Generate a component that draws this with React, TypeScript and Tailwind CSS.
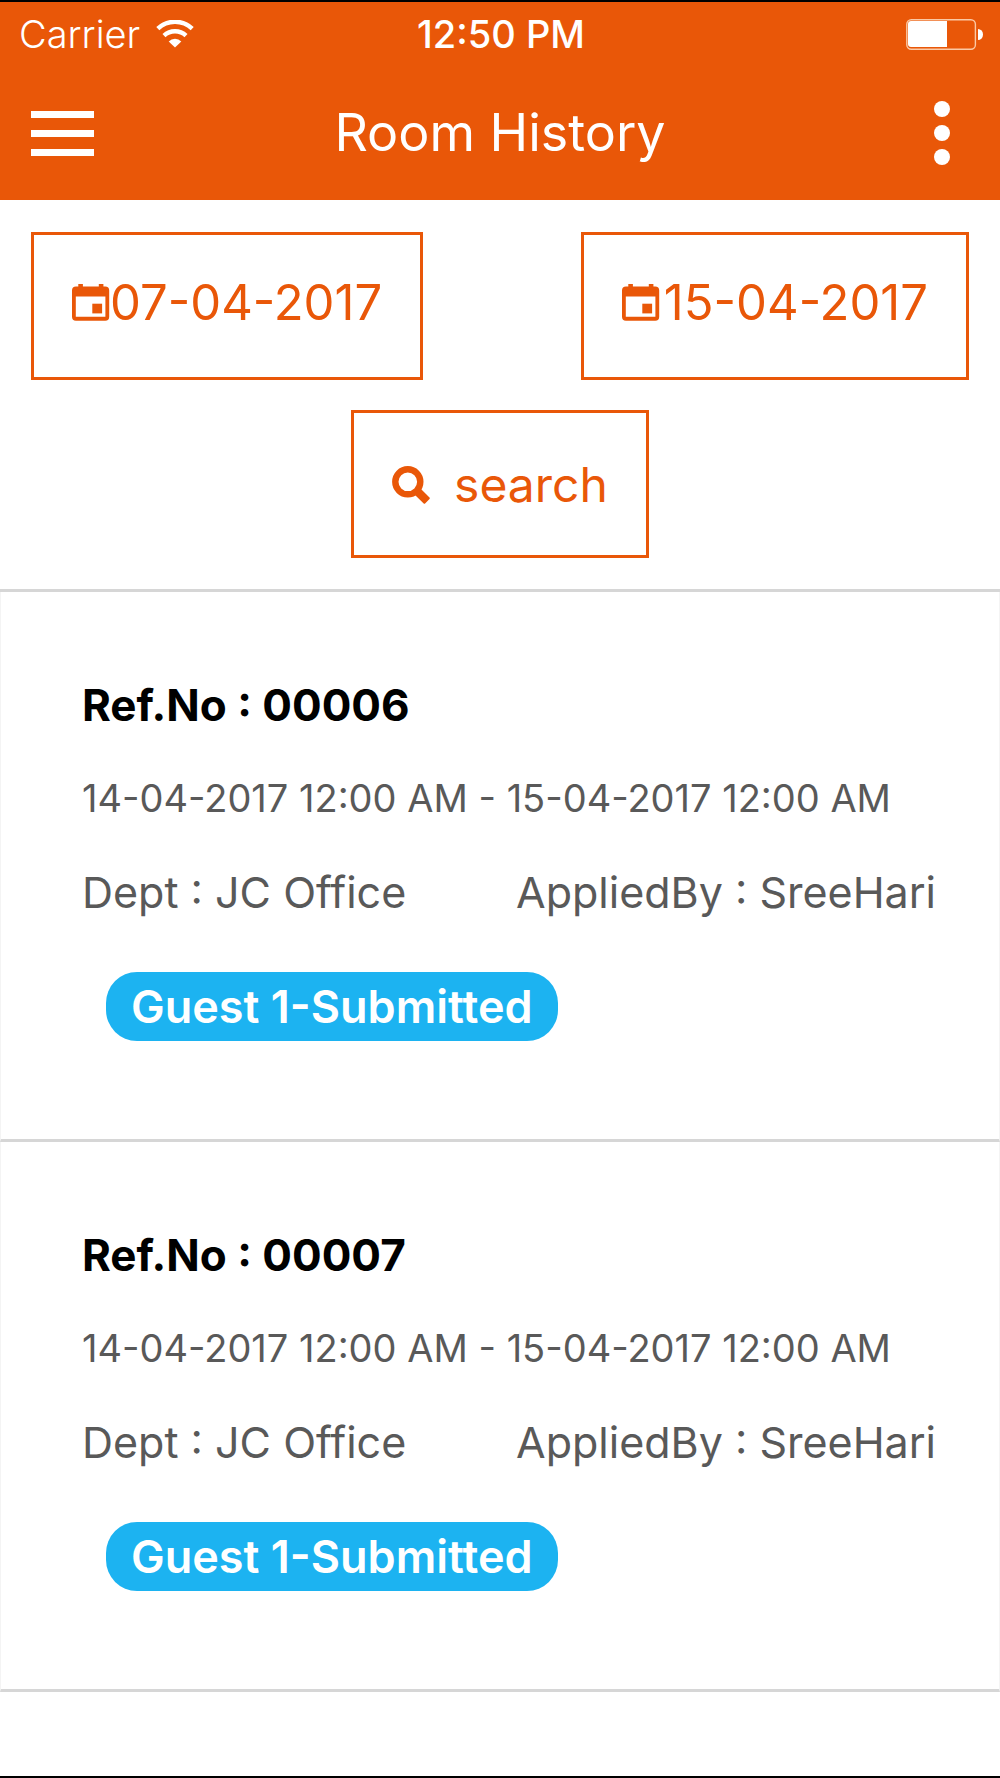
import { useState } from "react";

type Booking = {
  refNo: string;
  from: string;
  to: string;
  dept: string;
  appliedBy: string;
  guests: string[];
};

const BOOKINGS: Booking[] = [
  {
    refNo: "00006",
    from: "14-04-2017 12:00 AM",
    to: "15-04-2017 12:00 AM",
    dept: "JC Office",
    appliedBy: "SreeHari",
    guests: ["Guest 1-Submitted"],
  },
  {
    refNo: "00007",
    from: "14-04-2017 12:00 AM",
    to: "15-04-2017 12:00 AM",
    dept: "JC Office",
    appliedBy: "SreeHari",
    guests: ["Guest 1-Submitted"],
  },
];

// ── Icons ─────────────────────────────────────────────

function WifiIcon() {
  return (
    <svg viewBox="0 0 38 28" className="h-7 w-[38px]" fill="none" aria-hidden="true">
      <path d="M1.8 8.6a25 25 0 0 1 34.4 0" stroke="currentColor" strokeWidth="4.4" />
      <path d="M8 15.6a16 16 0 0 1 22 0" stroke="currentColor" strokeWidth="4.4" />
      <path d="M19 27.6l-6.3-6.2a9 9 0 0 1 12.6 0z" fill="currentColor" />
    </svg>
  );
}

function BatteryIcon() {
  return (
    <svg viewBox="0 0 77 31" className="h-[31px] w-[77px]" aria-hidden="true">
      <rect x="0.8" y="0.8" width="68.6" height="29.4" rx="4.5" fill="none" stroke="#fbc9a5" strokeWidth="1.4" />
      <path d="M5 2h36v26H5a3 3 0 0 1-3-3V5a3 3 0 0 1 3-3z" fill="currentColor" />
      <path d="M72 10a5 5.5 0 0 1 0 11z" fill="currentColor" />
    </svg>
  );
}

function CalendarIcon() {
  return (
    <svg viewBox="0 1 38 38" className="size-[38px] shrink-0" fill="currentColor" aria-hidden="true">
      <path
        fillRule="evenodd"
        d="M6.3 0h4.6v3.4h15.9V0h4.6v3.4h1.8a4 4 0 0 1 4 4v26.4a4 4 0 0 1-4 4H4a4 4 0 0 1-4-4V7.4a4 4 0 0 1 4-4h2.3zM3.8 13.4v20.4h29.6V13.4z"
      />
      <rect x="20.3" y="20.7" width="9.8" height="9.7" />
    </svg>
  );
}

function SearchIcon() {
  return (
    <svg viewBox="0 0 38 38" className="size-[38px] shrink-0" fill="none" aria-hidden="true">
      <circle cx="15.8" cy="15.8" r="12.5" stroke="currentColor" strokeWidth="6.4" />
      <path d="M28.5 22.5l9 9a1 1 0 0 1 0 1.4l-4.4 4.6a1 1 0 0 1-1.4 0l-9.2-9z" fill="currentColor" />
    </svg>
  );
}

// ── Header ────────────────────────────────────────────

function Header() {
  return (
    <header className="bg-[#e95708] text-white">
      <div className="grid h-16 grid-cols-[1fr_auto_1fr] items-center pr-[17px] pl-[19px]">
        <div className="flex items-center gap-4">
          <span className="text-[38px] leading-none font-light">Carrier</span>
          <WifiIcon />
        </div>
        <span className="text-[38px] leading-none font-medium">12:50 PM</span>
        <div className="flex justify-end">
          <BatteryIcon />
        </div>
      </div>

      <div className="grid h-[134px] grid-cols-[1fr_auto_1fr] items-center px-[31px]">
        <button aria-label="Open menu" className="flex w-[63px] flex-col gap-3">
          <span className="h-[7px] bg-white" />
          <span className="h-[7px] bg-white" />
          <span className="h-[7px] bg-white" />
        </button>
        <h1 className="text-[52px] leading-none">Room History</h1>
        <button
          aria-label="More options"
          className="mr-[19px] flex flex-col gap-2 justify-self-end"
        >
          <span className="size-4 rounded-full bg-white" />
          <span className="size-4 rounded-full bg-white" />
          <span className="size-4 rounded-full bg-white" />
        </button>
      </div>
    </header>
  );
}

// ── Filters ───────────────────────────────────────────

function DateButton({ label, value }: { label: string; value: string }) {
  return (
    <button
      aria-label={`${label} ${value}`}
      className="flex min-w-[388px] items-center justify-between border-3 border-[#e95708] px-[38px] pt-9 pb-[42px] text-[49px] leading-[64px]"
    >
      <CalendarIcon />
      {value}
    </button>
  );
}

function Filters() {
  const [from] = useState<string>("07-04-2017");
  const [to] = useState<string>("15-04-2017");

  return (
    <section className="flex flex-col items-center gap-[30px] px-[31px] pt-8 pb-[31px] text-[#e95708]">
      <div className="flex w-full justify-between">
        <DateButton label="From" value={from} />
        <DateButton label="To" value={to} />
      </div>
      <button className="flex items-center gap-6 border-3 border-[#e95708] px-[38px] pt-10 pb-[38px] text-[48px] leading-[64px]">
        <SearchIcon />
        search
      </button>
    </section>
  );
}

// ── Booking list ──────────────────────────────────────

function BookingCard({ booking }: { booking: Booking }) {
  return (
    <li className="border-x border-b-3 border-x-[#f4f4f4] border-b-[#d6d6d6] pt-[87px] pr-[49px] pb-[98px] pl-[81px] text-[#595959]">
      <h2 className="text-[44px] leading-[52px] font-bold text-black">
        Ref.No : {booking.refNo}
      </h2>
      <p className="mt-[43px] text-[38px] leading-[48px]">
        {booking.from} - {booking.to}
      </p>
      <div className="mt-11 grid grid-cols-2 text-[43px] leading-[52px]">
        <span>Dept : {booking.dept}</span>
        <span>AppliedBy : {booking.appliedBy}</span>
      </div>
      <div className="mt-[54px] flex flex-wrap gap-4 pl-6">
        {booking.guests.map((guest) => (
          <span
            key={guest}
            className="rounded-[31px] bg-[#1cb3f1] px-[25px] text-[45px] leading-[69px] font-semibold text-white"
          >
            {guest}
          </span>
        ))}
      </div>
    </li>
  );
}

export default function App() {
  return (
    <div className="min-h-screen border-y-2 border-black bg-white font-['Inter',sans-serif] [font-variant-ligatures:no-common-ligatures]">
      <Header />
      <main>
        <Filters />
        <ul className="border-t-3 border-[#d6d6d6]">
          {BOOKINGS.map((booking) => (
            <BookingCard key={booking.refNo} booking={booking} />
          ))}
        </ul>
      </main>
    </div>
  );
}
